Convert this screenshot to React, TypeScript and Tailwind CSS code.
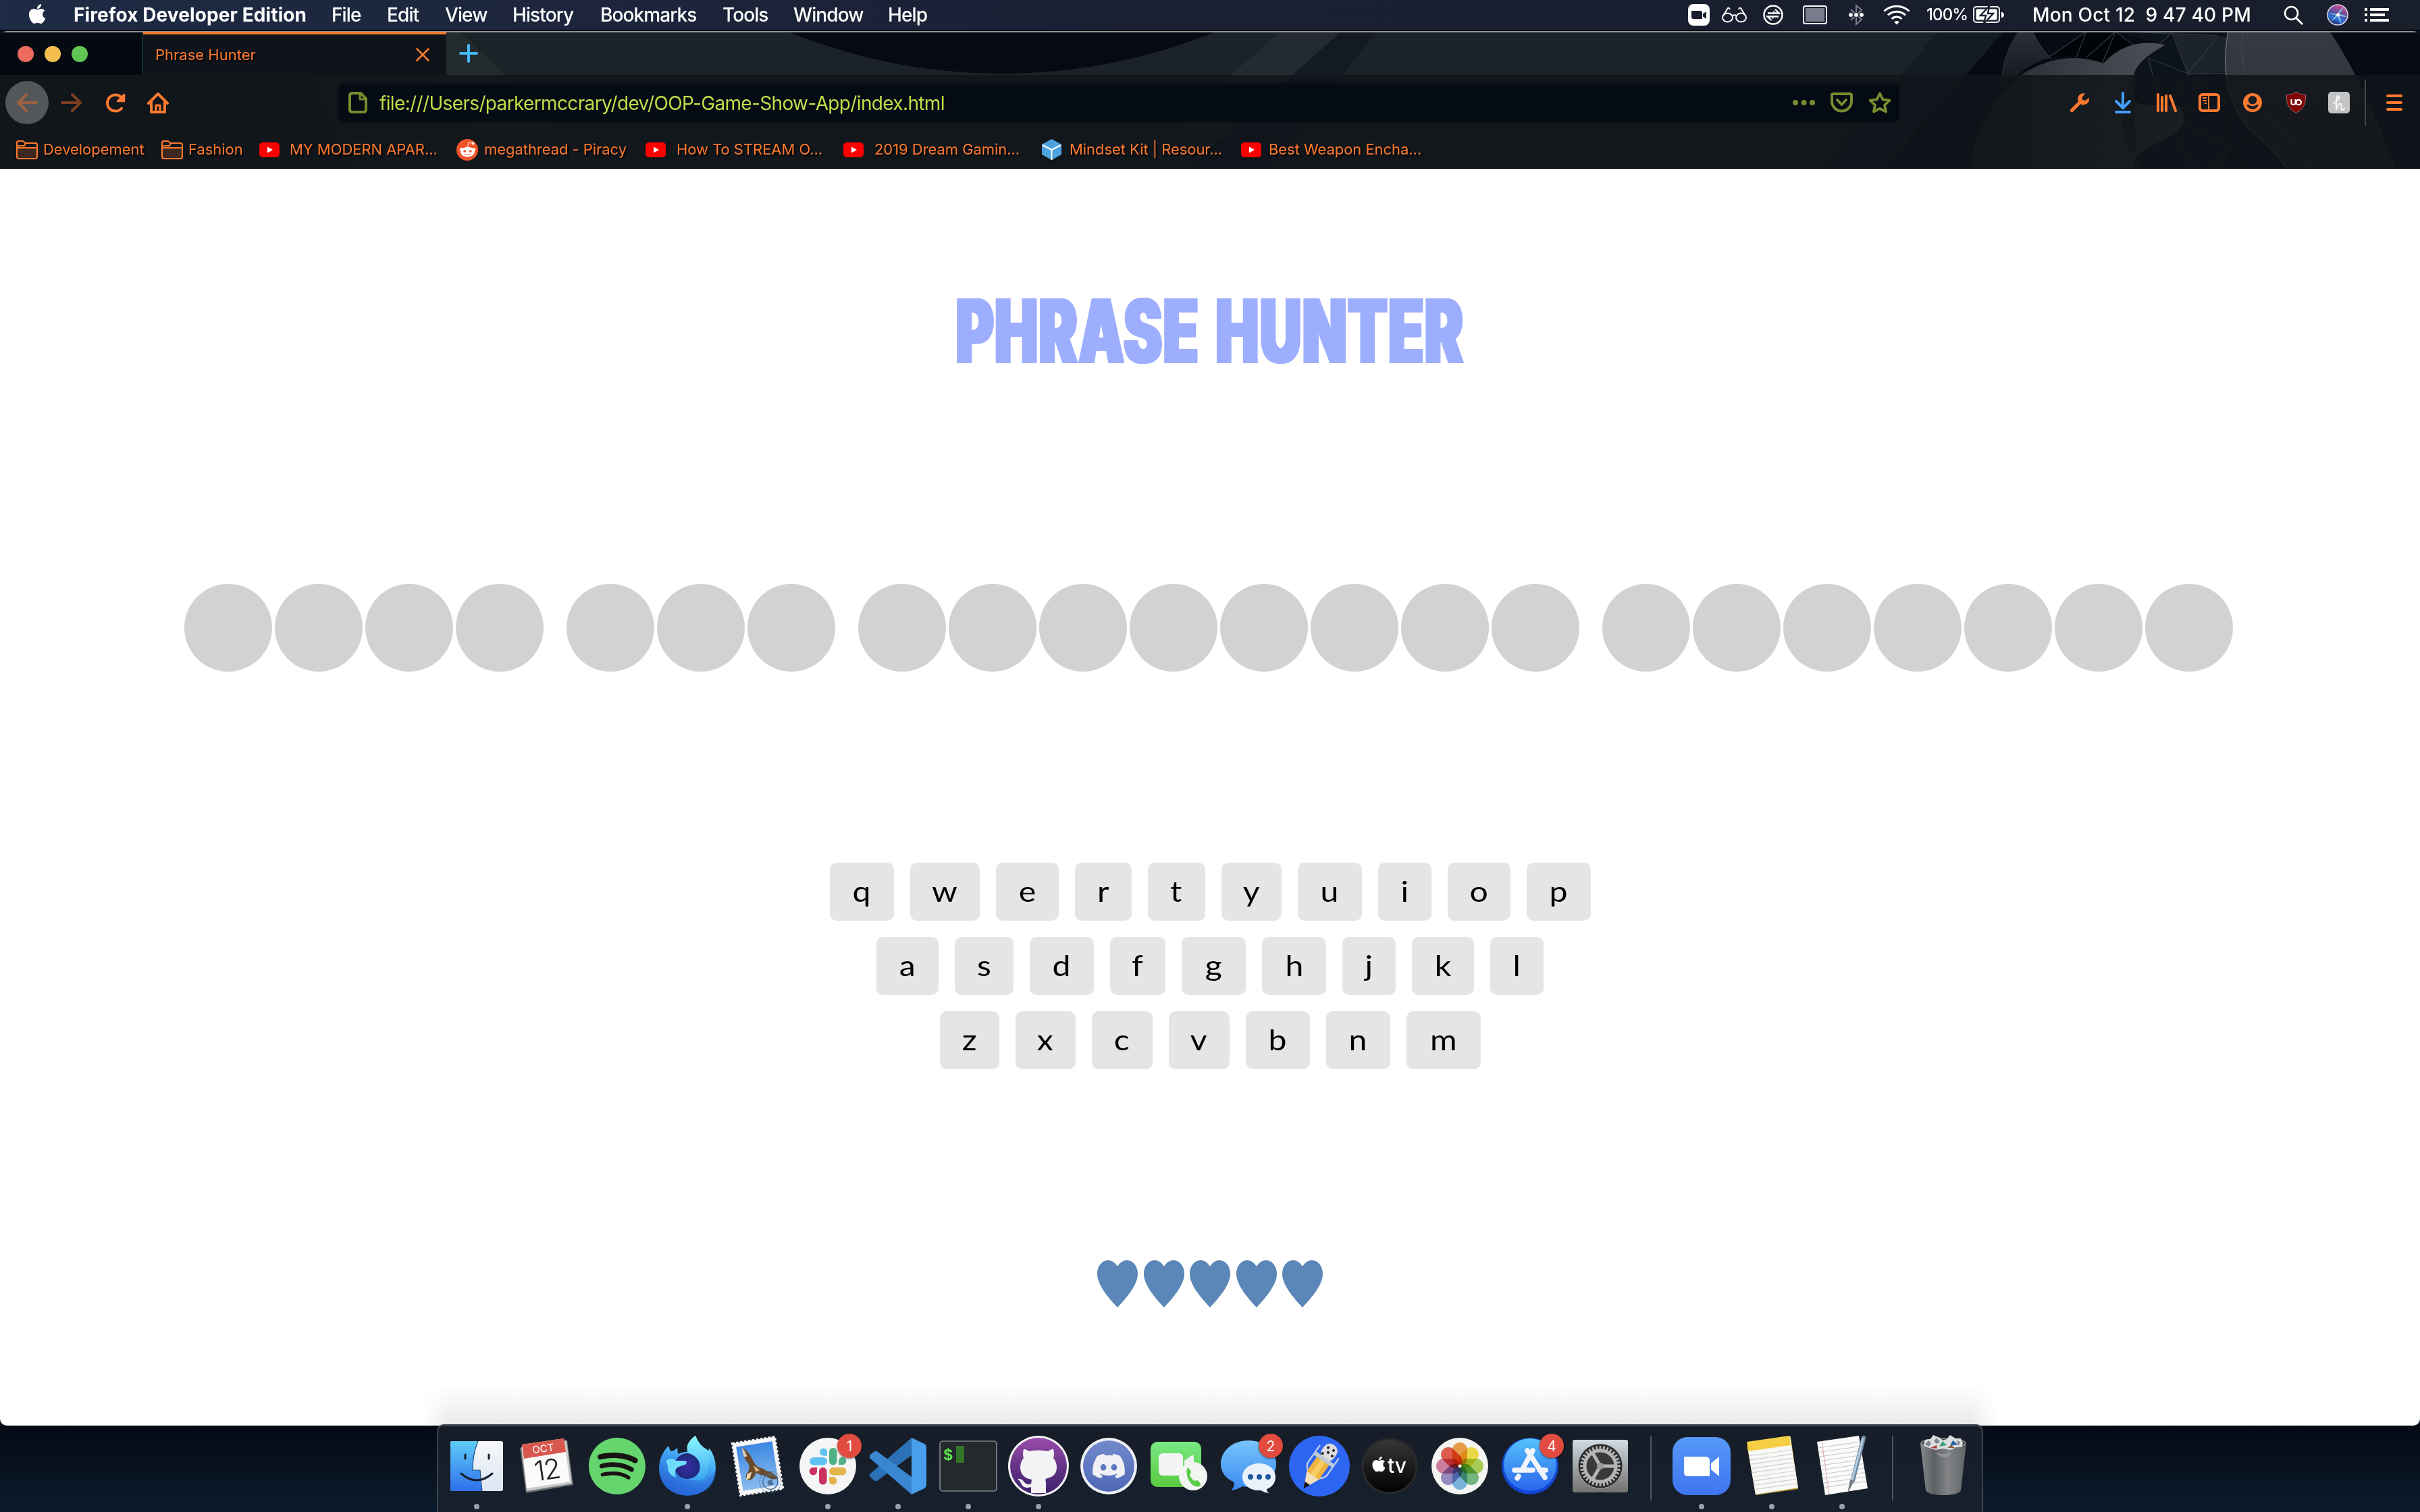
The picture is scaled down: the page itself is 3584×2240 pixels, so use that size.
import React from "react";
import { FaApple, FaDiscord, FaRedditAlien, FaSpotify } from "react-icons/fa";

const ORANGE = "#ff7a2f";

/* ---------- macOS menu bar ---------- */

const menus = [
  { label: "File", w: "w-[82px]" },
  { label: "Edit", w: "w-[86px]" },
  { label: "View", w: "w-[100px]" },
  { label: "History", w: "w-[130px]" },
  { label: "Bookmarks", w: "w-[181px]" },
  { label: "Tools", w: "w-[105px]" },
  { label: "Window", w: "w-[140px]" },
  { label: "Help", w: "w-[80px]" },
];

function MenuBar() {
  return (
    <header className="flex h-[46px] shrink-0 items-start bg-linear-to-r from-[#1e2b44] via-[#1a1f33] to-[#191e2b] text-[28px] leading-[44px] text-white border-b-2 border-[#030713]">
      <FaApple className="ml-[39px] mt-[4px] h-[33px] w-[32px]" />
      <div className="ml-[38px] w-[382px] whitespace-nowrap font-bold tracking-[0.1px]">Firefox Developer Edition</div>
      {menus.map((m) => (
        <div key={m.label} className={`${m.w} whitespace-nowrap font-medium tracking-[-0.9px]`}>
          {m.label}
        </div>
      ))}
      <div className="ml-auto flex h-[44px] items-center">
        <svg className="h-[32px] w-[32px]" viewBox="0 0 32 32">
          <rect width="32" height="32" rx="8" fill="#fff" />
          <path d="M5 10h13q3 0 3 3v9H8q-3 0-3-3zM22 14.500l5-3.500v11l-5-3.500z" fill="#191e2e" />
        </svg>
        <svg className="ml-[18px] h-[24px] w-[37px]" viewBox="0 0 37 24" fill="none" stroke="#fff" strokeWidth="2">
          <ellipse cx="8.500" cy="16" rx="7.500" ry="6.500" />
          <ellipse cx="28.500" cy="16" rx="7.500" ry="6.500" />
          <path d="M15.500 13q3-1.500 6 0M1.500 14L9 2q2-1 3 2M35.500 14L28 2q-2-1-3 2" />
        </svg>
        <svg className="ml-[24px] h-[30px] w-[30px]" viewBox="0 0 30 30" fill="none" stroke="#fff" strokeWidth="2.4">
          <circle cx="15" cy="15" r="13.500" />
          <path d="M7 12.500h17l-6-5.500M23 17.500H6.500l6 5.500" strokeWidth="2.300" />
          <path d="M16 9.500v2M14.500 18.500v2" strokeWidth="2" />
        </svg>
        <svg className="ml-[29px] h-[28px] w-[36px]" viewBox="0 0 36 28">
          <rect x="1" y="1" width="34" height="26" rx="3" fill="none" stroke="#fff" strokeWidth="2" />
          <rect x="4" y="4" width="28" height="20" fill="#787c8c" />
        </svg>
        <svg className="ml-[32px] h-[32px] w-[22px]" viewBox="0 0 22 32">
          <path d="M3 8l16 15-8 7V2l8 7L3 24" fill="none" stroke="#7d8190" strokeWidth="2" />
          <g fill="#fff" stroke="#191e2e" strokeWidth="1">
            <circle cx="3" cy="16" r="3.500" />
            <circle cx="11" cy="16" r="3.500" />
            <circle cx="19" cy="16" r="3.500" />
          </g>
        </svg>
        <svg className="ml-[29px] h-[30px] w-[40px]" viewBox="0 0 40 30" fill="none" stroke="#fff" strokeWidth="3">
          <path d="M1.500 9.500a27 27 0 0 1 37 0" />
          <path d="M7 15.500a19 19 0 0 1 26 0" />
          <path d="M12.500 21a11 11 0 0 1 15 0" />
          <path d="M16 25.500q4-3 8 0L20 29.500z" fill="#fff" stroke="none" />
        </svg>
        <div className="ml-[24px] w-[69px] whitespace-nowrap text-[24px] font-medium tracking-[-0.9px]">100%</div>
        <svg className="h-[28px] w-[46px]" viewBox="0 0 46 28">
          <rect x="1" y="2" width="38" height="23" rx="4" fill="none" stroke="#fff" strokeWidth="2" />
          <path d="M42 9.500q4 1 4 4.500t-4 4.500z" fill="#fff" />
          <rect x="4.500" y="5.500" width="31" height="16" rx="2" fill="#fff" />
          <path d="M24 1L11 15h8l-3 12 14-15h-8z" fill="#fff" stroke="#191e2e" strokeWidth="2.400" />
        </svg>
        <div className="ml-[42px] w-[372px] whitespace-pre font-medium tracking-[0.2px]">Mon Oct 12  9 47 40 PM</div>
        <svg className="h-[30px] w-[29px]" viewBox="0 0 29 30" fill="none" stroke="#fff" strokeWidth="2.500">
          <circle cx="11.500" cy="12.500" r="9.500" />
          <path d="M18.500 19.500L28 29" strokeWidth="3" />
        </svg>
        <svg className="ml-[35px] h-[32px] w-[32px]" viewBox="0 0 32 32">
          <defs>
            <linearGradient id="siri" x1="0.7" y1="0" x2="0.3" y2="1">
              <stop offset="0" stopColor="#d84b8c" />
              <stop offset="0.45" stopColor="#5a4e9e" />
              <stop offset="0.7" stopColor="#2b6fd8" />
              <stop offset="1" stopColor="#1a2050" />
            </linearGradient>
          </defs>
          <circle cx="16" cy="16" r="15" fill="url(#siri)" stroke="#d8dbe6" strokeWidth="1.500" />
          <path d="M3 14q9-1 13 2 1-7 9-11-4 7-7 10 6 0 12 4-8 0-12-2 3 4 3 12-4-6-5-11-4 5-10 7 4-5 8-8-5-2-11-3z" fill="#8fe3f7" opacity=".7" />
          <circle cx="16.500" cy="16" r="2.500" fill="#fff" />
        </svg>
        <svg className="ml-[24px] mr-[46px] h-[22px] w-[36px]" viewBox="0 0 36 22" fill="#fff">
          <path d="M0 1h4v4H0zM8 1h28v4H8zM0 9h4v4H0zM8 9h22v4H8zM0 17h4v4H0zM8 17h28v4H8z" />
        </svg>
      </div>
    </header>
  );
}

/* ---------- Browser chrome ---------- */

function ThemeArt() {
  return (
    <svg className="absolute inset-0 h-full w-full" viewBox="0 46 3584 204" preserveAspectRatio="none">
      <defs>
        <linearGradient id="fox" x1="0" y1="0" x2="1" y2="0">
          <stop offset="0" stopColor="#23272e" />
          <stop offset="1" stopColor="#51545b" />
        </linearGradient>
        <linearGradient id="ear" x1="0" y1="0" x2="0" y2="1">
          <stop offset="0" stopColor="#2b2f37" />
          <stop offset="1" stopColor="#11161d" />
        </linearGradient>
        <linearGradient id="tail" x1="0" y1="0" x2="0" y2="1">
          <stop offset="0" stopColor="#373a43" />
          <stop offset="0.35" stopColor="#33363f" />
          <stop offset="1" stopColor="#2c3036" />
        </linearGradient>
      </defs>
      <rect y="46" width="3584" height="204" fill="#1b2328" />
      <path d="M430 46L520 250H0V46z" fill="#151c22" />
      <path d="M600 46l130 204h160L680 46z" fill="#232b2e" />
      <circle cx="1484" cy="-730" r="839" fill="#050a13" />
      <path d="M1897 46h90L1766 250h-100z" fill="#232a30" />
      <path d="M1987 46h52L1880 250H1760z" fill="#131a21" />
      <path d="M2870 46h98L2789 250h-90z" fill="#131c22" />
      <path d="M2968 46H3584V250H2789z" fill="#060b14" />
      <g transform="translate(2900 40) scale(.33333)">
        <path d="M270 18h60q30 70 80 118-80 20-150 80-50 60-65 50-10-130 75-248z" fill="url(#ear)" />
        <path d="M330 18q25 65 85 125" fill="none" stroke="#33383f" strokeWidth="4" />
        <path d="M270 18q-75 110-75 230" fill="none" stroke="#2c3138" strokeWidth="4" />
        <path d="M405 135l165-115h130l80 60-130 80q-130-50-245-25z" fill="#010409" />
        <path d="M700 18h500v612H780q-20-40 20-80 130-60 180-90 40-50 20-90l-180-30-60-110q40-100 150-150z" fill="#0d131c" />
        <path d="M955 30l200 12-135 165zM1020 207l135-165 35 0v160z" fill="#1d232b" />
        <g fill="none" stroke="#30363e" strokeWidth="4">
          <path d="M410 130l160-110M525 135l45-115M570 135L700 20l-60 140M700 20l80 60M720 20l430 18M950 25l-60 55M950 25l70 182 135-165M1020 207h175M845 138l175 69M845 138l50 200M1020 207l-50 100M1020 207l170 130M965 480l90 150M1000 430l210 110M1210 380v160l-80 90M1210 540l120-60M1210 540l90 90M1000 375l200-30" />
        </g>
        <path d="M60 630q-10-200 215-415 180-120 370-53 110-120 275-82-130 70-140 135-50 110 40 130l160 5q50 60-10 120-40 20-150 80-40 30-40 80z" fill="url(#fox)" />
        <path d="M780 215q-60 130-50 220 10 90 50 130l30 60H790z" fill="#262a30" />
        <path d="M1200 18H1650Q1800 240 1945 630H1460Q1430 570 1290 450C1190 330 1170 180 1200 18z" fill="url(#tail)" />
        <path d="M1200 18C1170 180 1190 330 1290 450Q1430 570 1460 630" fill="none" stroke="#62666d" strokeWidth="5" />
        <path d="M1265 18q-30 250 140 400 90 90 170 210" fill="none" stroke="#42454d" strokeWidth="4" />
      </g>
    </svg>
  );
}

function TabStrip() {
  return (
    <div className="relative flex h-[65px] border-t-2 border-[#8d9296]">
      <div className="flex w-[212px] items-center gap-[16px] border-r-2 border-[#0f2b38] bg-[#050a11] pl-[26px]">
        <span className="h-[24px] w-[24px] rounded-full bg-[#ed6a5e]" />
        <span className="h-[24px] w-[24px] rounded-full bg-[#f5bf4f]" />
        <span className="h-[24px] w-[24px] rounded-full bg-[#61c554]" />
      </div>
      <div className="-mt-px flex w-[449px] items-center border-t-[4px] border-[#ff7a2f] bg-[#0f141a] pl-[18px] text-[22px] leading-[28px] text-[#ff7a2f] [text-shadow:2px_2px_2px_#000]">
        <span className="w-[386px] whitespace-nowrap">Phrase Hunter</span>
        <svg className="h-[20px] w-[20px]" viewBox="0 0 20 20" stroke={ORANGE} strokeWidth="2.500" strokeLinecap="round">
          <path d="M1.500 1.500l17 17M18.500 1.500l-17 17" />
        </svg>
      </div>
      <svg className="ml-[19px] mt-[17px] h-[28px] w-[28px]" viewBox="0 0 28 28" stroke="#45b9ff" strokeWidth="4" strokeLinecap="round">
        <path d="M14 2v24M2 14h24" />
      </svg>
    </div>
  );
}

function Toolbar() {
  return (
    <div className="flex h-[82px] items-center">
      <div className="ml-[8px] flex h-[64px] w-[64px] items-center justify-center rounded-full bg-[#53575a]">
        <svg className="h-[32px] w-[32px]" viewBox="0 0 32 32" fill="none" stroke="#9b6043" strokeWidth="4" strokeLinecap="round" strokeLinejoin="round">
          <path d="M30 16H3M15 4L3 16l12 12" />
        </svg>
      </div>
      <svg className="ml-[18px] h-[32px] w-[32px]" viewBox="0 0 32 32" fill="none" stroke="#7b4021" strokeWidth="4" strokeLinecap="round" strokeLinejoin="round">
        <path d="M2 16h27M17 4l12 12-12 12" />
      </svg>
      <svg className="ml-[34px] h-[30px] w-[30px]" viewBox="0 0 30 30" fill="none" stroke={ORANGE} strokeWidth="4" strokeLinecap="round">
        <path d="M24 23.500A12 12 0 1 1 25 9" />
        <path d="M28 3v10H18z" fill={ORANGE} strokeWidth="2.500" strokeLinejoin="round" />
      </svg>
      <svg className="ml-[32px] h-[32px] w-[32px]" viewBox="0 0 32 32" fill="none" stroke={ORANGE} strokeWidth="4" strokeLinecap="round" strokeLinejoin="round">
        <path d="M2 17L16 3l14 14M6 15v15h20V15" />
        <path d="M13 29v-9h6v9" strokeWidth="3" />
      </svg>
      <div className="ml-[252px] flex h-[56px] w-[2310px] items-center rounded-[6px] bg-[#050b12] pl-[14px] shadow-[0_0_4px_#0008]">
        <svg className="h-[32px] w-[28px]" viewBox="0 0 28 32" fill="none" stroke="#7c8a30" strokeWidth="4" strokeLinejoin="round">
          <path d="M6 2h12l8 8v16q0 4-4 4H6q-4 0-4-4V6q0-4 4-4z" />
          <path d="M17 3v8h8" strokeWidth="3" />
        </svg>
        <span className="ml-[18px] whitespace-nowrap pt-[2px] text-[28px] tracking-[-0.65px] text-[#bfdd4a]">
          file:///Users/parkermccrary/dev/OOP-Game-Show-App/index.html
        </span>
        <svg className="ml-auto h-[8px] w-[33px]" viewBox="0 0 33 8" fill="#7c8a30">
          <circle cx="4" cy="4" r="4" />
          <circle cx="16.500" cy="4" r="4" />
          <circle cx="29" cy="4" r="4" />
        </svg>
        <svg className="ml-[23px] h-[30px] w-[33px]" viewBox="0 0 33 30" fill="none" stroke="#7c8a30" strokeWidth="4" strokeLinecap="round" strokeLinejoin="round">
          <path d="M4 2h25q2 0 2 2v9a14.500 14.500 0 0 1-29 0V4q0-2 2-2z" />
          <path d="M10 11l6.500 7 6.500-7" />
        </svg>
        <svg className="ml-[23px] mr-[11px] h-[32px] w-[34px]" viewBox="0 0 34 32" fill="none" stroke="#7c8a30" strokeWidth="3.800" strokeLinejoin="round">
          <path d="M17 2.500l4.500 9 10 1.200-7.400 7 2 9.800L17 24.800l-9.100 4.700 2-9.800-7.400-7 10-1.200z" />
        </svg>
      </div>
      <svg className="ml-[254px] h-[28px] w-[28px]" viewBox="0 0 28 28">
        <path d="M2.500 25.500L15 13" stroke={ORANGE} strokeWidth="5" strokeLinecap="round" />
        <path d="M22 0.500a8.500 8.500 0 1 0 6 6.500L22 11l-4-1-.5-4z" fill={ORANGE} />
      </svg>
      <svg className="ml-[38px] h-[32px] w-[24px]" viewBox="0 0 24 32" fill="none" stroke="#459fff" strokeWidth="4" strokeLinecap="round" strokeLinejoin="round">
        <path d="M12 2v22M2 14l10 10 10-10M2 30h20" />
      </svg>
      <svg className="ml-[38px] h-[28px] w-[30px]" viewBox="0 0 30 28" stroke={ORANGE} strokeWidth="4" strokeLinecap="round">
        <path d="M2 2v24M8 6v20M14 4v22M20 4l8 22" />
      </svg>
      <svg className="ml-[32px] h-[28px] w-[32px]" viewBox="0 0 32 28" fill="none" stroke={ORANGE}>
        <rect x="2" y="2" width="28" height="24" rx="4" strokeWidth="4" />
        <path d="M15 2v24M6 7h6M6 11h6M8.500 15H12" strokeWidth="2" />
      </svg>
      <svg className="ml-[34px] h-[28px] w-[28px]" viewBox="0 0 28 28">
        <circle cx="14" cy="14" r="14" fill={ORANGE} />
        <circle cx="14" cy="10.300" r="6.300" fill="#1a1e22" />
        <path d="M5.300 17.500q2-1.500 4 .3 4.700 3 9.400 0 2-1.800 4-.3-2.500 6.500-8.700 6.500t-8.700-6.500z" fill="#1a1e22" />
      </svg>
      <svg className="ml-[36px] h-[32px] w-[29px]" viewBox="0 0 29 32">
        <path d="M14.500.5Q20 4.500 28.500 4.500q2 19-14 27-16-8-14-27 8.500 0 14-4z" fill="#800000" stroke="#9a6a6a" />
        <path d="M7.500 11v5q0 3 3 3t3-3V11" fill="none" stroke="#fff" strokeWidth="2.200" />
        <circle cx="18.200" cy="15.500" r="3.700" fill="none" stroke="#fff" strokeWidth="2.200" />
      </svg>
      <div className="ml-[33px] flex h-[32px] w-[32px] items-center justify-center rounded-[5px] bg-[#c3c3c3]">
        <svg className="h-[26px] w-[20px]" viewBox="0 0 20 26" fill="none" stroke="#fff" strokeWidth="1.800" strokeLinecap="round">
          <path d="M2 14Q11 9 10 4 7 0 6 11v13Q8 14 12 14.500q2 1 1.500 5t1.500 4.500q2 0 3-3" />
        </svg>
      </div>
      <div className="ml-[22px] h-[68px] w-[2px] bg-[#44484c]" />
      <svg className="ml-[30px] h-[24px] w-[24px]" viewBox="0 0 24 24" stroke={ORANGE} strokeWidth="4" strokeLinecap="round">
        <path d="M2 2h20M2 12h20M2 22h20" />
      </svg>
    </div>
  );
}

function Folder() {
  return (
    <svg className="h-[28px] w-[32px] shrink-0" viewBox="0 0 32 28" stroke={ORANGE} strokeWidth="2" fill="#3c281f">
      <path d="M1 8V4q0-3 3-3h5q2 0 3 2l1 1h15q3 0 3 3v17q0 3-3 3H4q-3 0-3-3z" />
      <path d="M1 11V4q0-3 3-3h5q2 0 3 2l1 1h15q3 0 3 3v4z" fill="#11161b" />
      <path d="M1 8h11l2-3" fill="none" />
    </svg>
  );
}

function YouTube() {
  return (
    <svg className="h-[22px] w-[30px] shrink-0" viewBox="0 0 30 22">
      <rect width="30" height="22" rx="5" fill="#f00" />
      <path d="M12 6.500l8 4.500-8 4.500z" fill="#fff" />
    </svg>
  );
}

function Reddit() {
  return (
    <span className="flex h-[32px] w-[32px] shrink-0 items-center justify-center rounded-full bg-[#f0532a]">
      <FaRedditAlien className="h-[25px] w-[25px] text-white" />
    </span>
  );
}

function Cube() {
  return (
    <svg className="h-[31px] w-[29px] shrink-0" viewBox="0 0 29 31">
      <path d="M14.500 0L29 8v15l-14.500 8L0 23V8z" fill="#4da3dd" />
      <path d="M1 9l13.500 7L28 9M14.500 16v15" fill="none" stroke="#fff" strokeWidth="2" />
    </svg>
  );
}

const bookmarks = [
  { icon: <Folder />, label: "Developement", box: "w-[215px] gap-[8px]" },
  { icon: <Folder />, label: "Fashion", box: "w-[145px] gap-[8px]" },
  { icon: <YouTube />, label: "MY MODERN APAR...", box: "w-[292px] gap-[15px]" },
  { icon: <Reddit />, label: "megathread - Piracy", box: "w-[280px] gap-[9px]" },
  { icon: <YouTube />, label: "How To STREAM O...", box: "w-[293px] gap-[16px]" },
  { icon: <YouTube />, label: "2019 Dream Gamin...", box: "w-[294px] gap-[16px]" },
  { icon: <Cube />, label: "Mindset Kit | Resour...", box: "w-[295px] gap-[12px]" },
  { icon: <YouTube />, label: "Best Weapon Encha...", box: "w-[292px] gap-[11px]" },
];

function BookmarksBar() {
  return (
    <div className="flex h-[57px] items-center pl-[24px] text-[22px] text-[#ff7a2f]">
      {bookmarks.map((b) => (
        <div key={b.label} className={`${b.box} flex shrink-0 items-center whitespace-nowrap tracking-[-0.05px] [text-shadow:2px_2px_2px_#000]`}>
          {b.icon}
          <span>{b.label}</span>
        </div>
      ))}
    </div>
  );
}

function BrowserChrome() {
  return (
    <div className="relative h-[204px] overflow-hidden rounded-t-[10px]">
      <ThemeArt />
      <TabStrip />
      <div className="relative h-[139px] border-b border-black bg-[#10151a]/85">
        <Toolbar />
        <BookmarksBar />
      </div>
    </div>
  );
}

/* ---------- Game page ---------- */

const phrase = [4, 3, 8, 7];

const keyRows = [
  [["q", "w-[95px]"], ["w", "w-[103px]"], ["e", "w-[93px]"], ["r", "w-[84px]"], ["t", "w-[85px]"], ["y", "w-[89px]"], ["u", "w-[95px]"], ["i", "w-[79px]"], ["o", "w-[93px]"], ["p", "w-[95px]"]],
  [["a", "w-[92px]"], ["s", "w-[87px]"], ["d", "w-[95px]"], ["f", "w-[82px]"], ["g", "w-[95px]"], ["h", "w-[95px]"], ["j", "w-[79px]"], ["k", "w-[92px]"], ["l", "w-[79px]"]],
  [["z", "w-[88px]"], ["x", "w-[89px]"], ["c", "w-[90px]"], ["v", "w-[90px]"], ["b", "w-[95px]"], ["n", "w-[95px]"], ["m", "w-[110px]"]],
];

function Game() {
  return (
    <main className="relative flex h-[1862px] flex-col items-center rounded-b-[10px] bg-white">
      <h1 className="mt-[192px] h-[96px] origin-center scale-x-[0.642] whitespace-nowrap font-[Inter] text-[132px] font-black leading-[96px] tracking-[3px] text-[#9eaeff] [text-shadow:4px_0_0_#9eaeff,-4px_0_0_#9eaeff] [word-spacing:8px]">
        PHRASE HUNTER
      </h1>
      <div className="mt-[327px] flex gap-[34px] pr-[4px]">
        {phrase.map((count, w) => (
          <div key={w} className="flex gap-[4px]">
            {Array.from({ length: count }, (_, i) => (
              <span key={i} className="h-[130px] w-[130px] rounded-full bg-[#d2d2d2]" />
            ))}
          </div>
        ))}
      </div>
      <div className="mt-[283px] flex flex-col items-center gap-[24px]">
        {keyRows.map((row, r) => (
          <div key={r} className="flex gap-[24px]">
            {row.map(([k, w]) => (
              <button key={k} className={`${w} flex h-[86px] items-center justify-center rounded-[10px] bg-[#e5e5e5] pb-[3px] font-[Lato] text-[43px] leading-none text-black`}>
                <span className="inline-block scale-x-[1.12]">{k}</span>
              </button>
            ))}
          </div>
        ))}
      </div>
      <div className="mt-[283px] flex gap-[8.5px]">
        {[0, 1, 2, 3, 4].map((i) => (
          <svg key={i} className="h-[70px] w-[60px]" viewBox="0 0 60 70">
            <path d="M30 9C26 3 21 0 16 0 7 0 0 9 0 20c0 17 17 36 30 50 13-14 30-33 30-50C60 9 53 0 44 0c-5 0-10 3-14 9z" fill="#5a86b8" />
          </svg>
        ))}
      </div>
      <div className="absolute bottom-0 left-[626px] h-[60px] w-[2332px] bg-linear-to-b from-white to-[#e9e9e9] [mask-image:linear-gradient(to_right,transparent,black_40px,black_calc(100%-40px),transparent)]" />
    </main>
  );
}

/* ---------- Dock ---------- */

function Badge({ n }: { n: string }) {
  return (
    <span className="absolute left-[66px] top-[11px] flex h-[36px] w-[36px] items-center justify-center rounded-full bg-[#e24b3f] text-[21px] leading-none text-white shadow-[0_1px_3px_#0008]">
      {n}
    </span>
  );
}

const Finder = () => (
  <>
    <defs>
      <linearGradient id="fa" x1="0" y1="0" x2="0" y2="1"><stop offset="0" stopColor="#5fcdf7" /><stop offset="1" stopColor="#2f6fec" /></linearGradient>
      <linearGradient id="fb" x1="0" y1="0" x2="0" y2="1"><stop offset="0" stopColor="#f7f7f8" /><stop offset="1" stopColor="#dbe6f5" /></linearGradient>
    </defs>
    <rect x="-39" y="-37" width="78" height="74" rx="3" fill="url(#fb)" />
    <path d="M2-37H-36q-3 0-3 3v68q0 3 3 3H8Q6 22 5 6H-6Q-6-18 2-37z" fill="url(#fa)" />
    <path d="M2-37Q-6-18-6 6H5Q6 22 8 37" fill="none" stroke="#234a80" strokeWidth="1.200" />
    <path d="M-17-17v6M18-17v6M-23 11Q0 31 23 11" fill="none" stroke="#16202e" strokeWidth="3" strokeLinecap="round" />
  </>
);

const Calendar = () => (
  <g transform="translate(-1 0)">
    <path d="M-39-27l9 67 70-12-9-66z" fill="#6d7274" />
    <path d="M-37-28l8 65 67-11-8-64z" fill="#c9cbcb" />
    <path d="M-36-32l62-9 9 64-64 10z" fill="#fafafa" />
    <path d="M-36-32l62-9 3 20-62 10z" fill="#d8584e" />
    <g transform="rotate(-8)" textAnchor="middle">
      <text x="-1" y="-21" fontSize="15" fill="#fff">OCT</text>
      <text x="0" y="20" fontSize="41" fontWeight="300" letterSpacing="-2" fill="#222">12</text>
    </g>
  </g>
);

const Firefox = () => (
  <>
    <defs>
      <linearGradient id="ffa" x1="0.7" y1="0" x2="0.3" y2="1"><stop offset="0" stopColor="#7ff4ff" /><stop offset="0.45" stopColor="#3f9ff2" /><stop offset="1" stopColor="#2157cf" /></linearGradient>
      <radialGradient id="ffb"><stop offset="0" stopColor="#3a2aa8" /><stop offset="1" stopColor="#1d2a78" /></radialGradient>
      <linearGradient id="ffc" x1="0.5" y1="0" x2="0.5" y2="1"><stop offset="0" stopColor="#8df8ff" /><stop offset="1" stopColor="#3aa4f4" /></linearGradient>
    </defs>
    <path d="M12-45Q18-30 30-24q3 2 2-3 10 12 10 31A42 40 0 0 1-42 4q0-20 14-34l3 8q8-1 10-6l1 10Q-2-22 0-21-2-36 12-45z" fill="url(#ffa)" />
    <circle cx="0" cy="0" r="19" fill="url(#ffb)" />
    <path d="M12-45Q-6-32 2-19 22-12 18 8 14 18 2 19q22 8 28-10 6-22-4-34Q16-32 12-45z" fill="url(#ffc)" />
    <path d="M-32-8q10-6 14 0h12q8 0 3 6-9 2-13 5-5 8 0 14-14-4-13-18z" fill="#6fdcfb" />
    <path d="M-42 4Q-35 28-8 30 28 32 42 4 42 42 0 43-40 42-42 4z" fill="#2a6ee0" opacity=".5" />
  </>
);

const Mail = () => (
  <>
    <defs>
      <linearGradient id="sky" x1="0" y1="0" x2="0" y2="1"><stop offset="0" stopColor="#3d86e2" /><stop offset="1" stopColor="#8bbdee" /></linearGradient>
    </defs>
    <g transform="rotate(-9)">
      <rect x="-32" y="-39" width="64" height="78" fill="#f6f6f6" stroke="#f6f6f6" strokeWidth="3" strokeDasharray="3.500 2.500" />
      <rect x="-27" y="-33" width="54" height="66" fill="url(#sky)" />
      <path d="M-18-31q9 8 12 20 2 8 7 13 6 2 11 7 11 4 16 14-10 2-19-7-8-2-13-7-2 6-8 9-7 2-7-2-2-6 4-10 4-6 2-12-7-9-5-25z" fill="#6b4a2c" />
      <path d="M-18-31q3 6 5 14l-4 1q-3-7-1-15z" fill="#d8cdb8" />
      <path d="M-17 9l7-2-4 9-6 2z" fill="#ead9b4" />
      <path d="M-6-2q5 4 8 9l-6 1z" fill="#d9b27a" />
      <circle cx="15" cy="26" r="11" fill="none" stroke="#4c6f99" strokeWidth="1.500" />
      <circle cx="15" cy="26" r="16" fill="none" stroke="#4c6f99" strokeWidth="1" opacity=".6" />
      <FaApple x={9} y={20} size={12} color="#4c6f99" />
    </g>
  </>
);

const Slack = () => (
  <>
    <circle r="42" fill="#f5f5f5" />
    <path d="M-1-15v-6a5.500 5.500 0 1 0-5.500 5.500z" fill="#5ec3ee" />
    <rect x="-27" y="-13" width="26" height="11.500" rx="5.700" fill="#5ec3ee" />
    <rect x="2" y="-27" width="11.500" height="25.500" rx="5.700" fill="#4fb286" />
    <path d="M16-2v-5.500A5.700 5.700 0 1 1 21.500-2z" fill="#4fb286" />
    <rect x="2" y="2" width="25.500" height="11.500" rx="5.700" fill="#e4b34a" />
    <path d="M2 16v5.500A5.700 5.700 0 1 0 7.500 16z" fill="#e4b34a" />
    <rect x="-13" y="2" width="11.500" height="25.500" rx="5.700" fill="#cb315e" />
    <path d="M-16 2v5.500A5.700 5.700 0 1 1-21.500 2z" fill="#cb315e" />
  </>
);

const VSCode = () => (
  <>
    <path d="M20-42L-42 12q-1 3 1 4l6 6q3 1 5-1L20-16z" fill="#2a72b5" />
    <path d="M20 42L-42-12q-1-3 1-5l6-5q3-1 5 1L20 16z" fill="#3987d0" />
    <path d="M20-42l19 9q3 2 3 5v56q0 3-3 5l-19 9z" fill="#4a9fec" />
  </>
);

const Terminal = () => (
  <>
    <rect x="-42" y="-37" width="84" height="74" rx="4" fill="#23292c" stroke="#a5abae" strokeWidth="1.200" />
    <text x="-37" y="-9" fontSize="24" fontFamily="Liberation Mono" fontWeight="700" fill="#62e34c">$</text>
    <rect x="-18" y="-30" width="12" height="25" fill="#33732a" />
  </>
);

const FaceTime = () => (
  <>
    <defs>
      <linearGradient id="ft" x1="0" y1="0" x2="0" y2="1"><stop offset="0" stopColor="#77ea83" /><stop offset="1" stopColor="#5bc942" /></linearGradient>
    </defs>
    <rect x="-42" y="-36" width="75" height="67" rx="10" fill="url(#ft)" />
    <rect x="-30" y="-19" width="36" height="33" rx="6" fill="#f4f4f4" />
    <path d="M8-8l11-8q3-1 3 2V6L8-1z" fill="#eef3ee" />
    <circle cx="21" cy="15" r="21" fill="#f3f5f3" />
    <path d="M12 3q4-1 6 6l-2 4q2 6 7 9l4-1q6 4 5 8-5 4-13-2Q9 16 12 3z" fill="#58cc46" />
  </>
);

const Messages = () => (
  <>
    <defs>
      <linearGradient id="ms" x1="0" y1="0" x2="0" y2="1"><stop offset="0" stopColor="#77c4fa" /><stop offset="1" stopColor="#3a8af2" /></linearGradient>
    </defs>
    <path d="M-1-38c23 0 41 15 41 35S22 31-1 31q-5 0-9-1-8 5-17 6 5-4 5-12-20-9-20-27c0-20 18-35 41-35z" fill="url(#ms)" />
    <path d="M15-4c14 0 24 9 24 20 0 9-5 15-13 18 0 4 2 5 4 6-6 0-10-3-13-4-15 1-27-8-27-20S1-4 15-4z" fill="#e9f2fa" />
    <g fill="#1f57a0"><circle cx="2" cy="16" r="4" /><circle cx="15" cy="16" r="4" /><circle cx="28" cy="16" r="4" /></g>
  </>
);

const Pencil = () => (
  <>
    <circle r="45" fill="#2c66f3" />
    <g transform="rotate(35)">
      <path d="M-17-26V4q0 10 17 16Q17 14 17 4v-30" fill="none" stroke="#b9c8ea" strokeWidth="2.500" />
      <rect x="-11" y="-38" width="22" height="26" rx="10" fill="#dcdcdc" />
      <g fill="#222"><circle cx="-5" cy="-30" r="2" /><circle cx="4" cy="-31" r="2" /><circle cx="-1" cy="-24" r="2" /><circle cx="7" cy="-23" r="2" /><circle cx="-7" cy="-18" r="2" /></g>
      <rect x="-16" y="-15" width="32" height="6" fill="#c3c9d3" />
      <path d="M-11-9h22v26H-11z" fill="#f0b440" />
      <path d="M-4-9h8v26h-8z" fill="#f9cf65" />
      <path d="M-11 17h22L0 40z" fill="#f5dfb8" />
      <path d="M-4.500 31h9L0 41z" fill="#111" />
    </g>
  </>
);

const AppleTV = () => (
  <>
    <defs>
      <linearGradient id="tv" x1="0" y1="0" x2="0" y2="1"><stop offset="0" stopColor="#383838" /><stop offset="1" stopColor="#000" /></linearGradient>
    </defs>
    <circle r="40" fill="url(#tv)" stroke="#2a2a2a" strokeWidth="3" />
    <FaApple x={-29} y={-16} width={26} height={26} size={26} color="#fff" />
    <text x="-3" y="10" fontSize="30" fontWeight="500" fill="#fff">tv</text>
  </>
);

const petals = ["#f19a3a", "#f5e03c", "#a9cf4c", "#6fb97a", "#76b4e4", "#9585c4", "#d2789e", "#e5523f"];
const Photos = () => (
  <>
    <circle r="42" fill="#f4f4f3" />
    <g className="[&>rect]:mix-blend-multiply">
      {petals.map((c, i) => (
        <rect key={c} x="-11" y="-35" width="22" height="35" rx="11" fill={c} opacity=".92" transform={`rotate(${i * 45})`} />
      ))}
    </g>
    <circle r="2.500" fill="#fff" />
  </>
);

const AppStore = () => (
  <>
    <defs>
      <linearGradient id="as" x1="0" y1="0" x2="0" y2="1"><stop offset="0" stopColor="#54c3fb" /><stop offset="1" stopColor="#2a64ec" /></linearGradient>
    </defs>
    <circle r="42" fill="#1346d2" />
    <circle cy="-2" r="39" fill="url(#as)" />
    <g stroke="#f1f5fb" strokeWidth="7.500" strokeLinecap="round">
      <path d="M4-23L-12 6M-4-23L22 17M-23 6H4M14 6h9M-17 15l-2 3" />
    </g>
  </>
);

const teeth = Array.from({ length: 32 }, (_, i) => i * 11.25);
const Settings = () => (
  <>
    <defs>
      <linearGradient id="st" x1="0" y1="0" x2="0" y2="1"><stop offset="0" stopColor="#cfdbe3" /><stop offset="1" stopColor="#72716f" /></linearGradient>
    </defs>
    <rect x="-41" y="-39" width="82" height="78" rx="3" fill="url(#st)" />
    <circle r="33" fill="#25272a" />
    <circle r="33" fill="none" stroke="#a5a7a8" />
    {teeth.map((a) => (
      <rect key={a} x="-1.500" y="-30" width="3" height="6" fill="#b4b4b2" transform={`rotate(${a})`} />
    ))}
    <circle r="23" fill="#3a3a3a" stroke="#b4b4b2" strokeWidth="5" />
    <path d="M0 0h22M0 0l-11-19M0 0l-11 19" stroke="#b4b4b2" strokeWidth="5" />
    <circle r="5" fill="#9b9b99" />
  </>
);

const Zoom = () => (
  <>
    <defs>
      <linearGradient id="zm" x1="0" y1="0" x2="0" y2="1"><stop offset="0" stopColor="#5598f8" /><stop offset="1" stopColor="#3f75f1" /></linearGradient>
    </defs>
    <rect x="-43" y="-43" width="86" height="86" rx="22" fill="url(#zm)" />
    <path d="M-26-14h32q6 0 6 6v23h-32q-6 0-6-6zM14-4l12-10v29L14 5z" fill="#fff" />
  </>
);

const Notes = () => (
  <>
    <path d="M-36-28l64-16 11 78-63 9z" fill="#b89a32" />
    <path d="M-36-28l63-16 12 76-63 10z" fill="#f8f8f6" />
    <path d="M-37-36l63-9 2 14-63 9z" fill="#f6cf46" />
    <g stroke="#cfcfcd" strokeWidth="1.200">
      {[0, 1, 2, 3, 4, 5, 6, 7, 8].map((i) => (
        <path key={i} d="M-34-15l63-9" transform={`translate(${i} ${i * 6.200})`} />
      ))}
    </g>
  </>
);

const TextEdit = () => (
  <>
    <path d="M-37-36l62-9 13 78-63 10z" fill="#fbfbfa" />
    <g stroke="#c3c5c8" strokeWidth="1.200">
      {[0, 1, 2, 3, 4, 5, 6, 7, 8, 9].map((i) => (
        <path key={i} d="M-35-27l62-9" transform={`translate(${i} ${i * 6.500})`} />
      ))}
    </g>
    <path d="M-30-37l11 79" stroke="#e9a9a9" />
    <path d="M32-42L16 21" stroke="#6f88a0" strokeWidth="6.500" strokeLinecap="round" />
    <path d="M31-40L15 21" stroke="#b5cde0" strokeWidth="3" strokeLinecap="round" />
    <path d="M12 20l6 2-10 19z" fill="#777c80" />
  </>
);

const Trash = () => (
  <>
    <defs>
      <linearGradient id="tr" x1="0" y1="0" x2="1" y2="0"><stop offset="0" stopColor="#85898c" /><stop offset=".3" stopColor="#5e6163" /><stop offset=".6" stopColor="#828486" /><stop offset="1" stopColor="#606467" /></linearGradient>
    </defs>
    <path d="M-34-34q34 16 68 0l-8 70q-4 7-26 7t-26-7z" fill="url(#tr)" />
    <ellipse cy="-34" rx="33" ry="7" fill="#4a4e52" stroke="#8c9094" strokeWidth="1.500" />
    <path d="M-29-30l2-9 8-1 4-6 10 4 4 4 6-2 5-6 8 5 8 0 3 7-2 6-8 0-8 4-12-2-10 2-10-3z" fill="#dcdddf" />
    <path d="M-27-32l5-6 4 4-3 5zM-10-42l5 6-5 3-4-4zM20-38l5 2-2 6z" fill="#7d8288" />
    <path d="M-6-29l5-8 6 6z" fill="#3a9f7a" />
    <path d="M10-30l4-8 8 6z" fill="#27619e" />
    <path d="M-19-27l9-4 1 5z" fill="#b03b32" />
    <path d="M6-27l6-4 5 4z" fill="#8c5a3a" />
    <path d="M-12-20q14 4 24 0-8 14-24 0z" fill="#a5a8aa" opacity=".6" />
  </>
);

const GitHub = () => (
  <>
    <defs>
      <linearGradient id="gh" x1="0" y1="0" x2="0" y2="1"><stop offset="0" stopColor="#9a4dab" /><stop offset=".6" stopColor="#5c2f80" /><stop offset="1" stopColor="#3f2270" /></linearGradient>
    </defs>
    <circle r="45" fill="#f3f2f4" />
    <circle r="42" fill="url(#gh)" />
    <path d="M-22-25q1-1 8 3 14-3 28 0 7-4 8-3 2 7 0 13 5 6 5 14 0 13-14 16l-3 2q1 2 1 6v14H-11V31q-11 3-14-4-3-6-6-8 6-1 10 5 4 5 10 2l1-6q-17-3-17-18 0-8 5-14-2-6 0-13z" fill="#f3f2f4" />
  </>
);

const Discord = () => (
  <>
    <defs>
      <linearGradient id="dc" x1="0" y1="0" x2="0" y2="1"><stop offset="0" stopColor="#7289cb" /><stop offset="1" stopColor="#4e68b8" /></linearGradient>
    </defs>
    <circle r="42" fill="#f0f1f5" />
    <circle r="38" fill="url(#dc)" />
    <FaDiscord x={-26} y={-26} size={52} color="#f0f1f5" />
  </>
);

const Spotify = () => (
  <>
    <circle r="38" fill="#191414" />
    <FaSpotify x={-43.300} y={-43.300} size={86.600} color="#65d66e" />
  </>
);

type App = { name: string; art: React.ReactNode; running?: boolean; badge?: string };

const apps: App[] = [
  { name: "Finder", art: <Finder />, running: true },
  { name: "Calendar", art: <Calendar /> },
  { name: "Spotify", art: <Spotify /> },
  { name: "Firefox", art: <Firefox />, running: true },
  { name: "Mail", art: <Mail /> },
  { name: "Slack", art: <Slack />, running: true, badge: "1" },
  { name: "Code", art: <VSCode />, running: true },
  { name: "Terminal", art: <Terminal />, running: true },
  { name: "GitHub", art: <GitHub />, running: true },
  { name: "Discord", art: <Discord /> },
  { name: "FaceTime", art: <FaceTime /> },
  { name: "Messages", art: <Messages />, badge: "2" },
  { name: "Notability", art: <Pencil /> },
  { name: "TV", art: <AppleTV /> },
  { name: "Photos", art: <Photos /> },
  { name: "App Store", art: <AppStore />, badge: "4" },
  { name: "Settings", art: <Settings /> },
];

const openApps: App[] = [
  { name: "Zoom", art: <Zoom />, running: true },
  { name: "Notes", art: <Notes />, running: true },
  { name: "TextEdit", art: <TextEdit />, running: true },
];

function DockItem({ app }: { app: App }) {
  return (
    <div className="relative flex w-[104px] flex-col items-center">
      <svg className="mt-[11px] h-[96px] w-[96px] overflow-visible font-[Inter]" viewBox="-48 -48 96 96">
        {app.art}
      </svg>
      {app.running && <span className="mt-[8px] h-[8px] w-[8px] rounded-full bg-[#9aa2b0]" />}
      {app.badge && <Badge n={app.badge} />}
    </div>
  );
}

const Divider = () => (
  <div className="flex w-[46px] justify-center pt-[14px]">
    <span className="h-[96px] w-[2px] bg-[#4d5663]" />
  </div>
);

function Dock() {
  return (
    <div className="flex h-[130px] rounded-t-[10px] border-x-2 border-t-[3px] border-[#3d434d] bg-linear-to-b from-[#171d28] to-[#16202d] px-[5px]">
      {apps.map((a) => (
        <DockItem key={a.name} app={a} />
      ))}
      <Divider />
      {openApps.map((a) => (
        <DockItem key={a.name} app={a} />
      ))}
      <Divider />
      <DockItem app={{ name: "Trash", art: <Trash /> }} />
    </div>
  );
}

export default function App() {
  return (
    <div className="flex h-[2240px] w-[3584px] flex-col overflow-hidden bg-[#07101c] font-[Inter,sans-serif]">
      <MenuBar />
      <BrowserChrome />
      <Game />
      <div className="relative -mt-[2px] flex h-[130px] justify-center bg-[linear-gradient(to_bottom,transparent_2px,#050a14_2px,#0b1b2c)]">
        <Dock />
      </div>
    </div>
  );
}
